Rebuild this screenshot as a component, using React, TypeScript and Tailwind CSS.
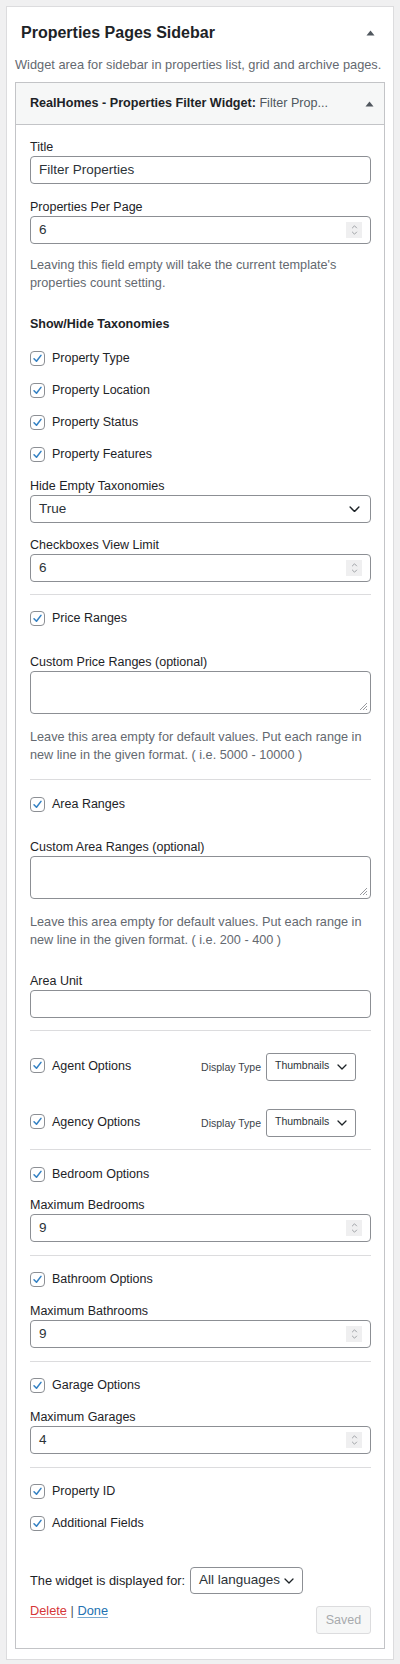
import type { ReactNode } from "react";

const font = "font-['Liberation_Sans',Arial,sans-serif]";

function Caret() {
  return (
    <svg width="9" height="6" viewBox="0 0 9 6" className="shrink-0">
      <path d="M4.5 0.5 L8.5 5.5 L0.5 5.5 Z" fill="#50575e" />
    </svg>
  );
}

function Chevron({ size = 11 }: { size?: number }) {
  return (
    <svg width={size} height={size * 0.6} viewBox="0 0 10 6" className="shrink-0">
      <path d="M1 1 L5 5 L9 1" fill="none" stroke="#1d2327" strokeWidth="1.3" strokeLinecap="round" strokeLinejoin="round" />
    </svg>
  );
}

function Check({ label }: { label: string }) {
  return (
    <div className="flex h-[32px] items-center gap-[7px]">
      <span className="flex h-[15px] w-[15px] items-center justify-center rounded-[4px] border border-[#8c8f94] bg-white">
        <svg width="11" height="11" viewBox="0 0 12 12">
          <path d="M2.2 6.3 L4.9 9 L9.8 2.6" fill="none" stroke="#3582c4" strokeWidth="1.7" strokeLinecap="round" strokeLinejoin="round" />
        </svg>
      </span>
      <span className="text-[12.5px] leading-[18px] text-[#1d2327]">{label}</span>
    </div>
  );
}

function Label({ children }: { children: ReactNode }) {
  return <div className="text-[12.5px] leading-[18px] text-[#1d2327]">{children}</div>;
}

function TextInput({ value = "" }: { value?: string }) {
  return (
    <div className="flex h-[28px] items-center rounded-[4px] border border-[#8c8f94] bg-white px-[8px] text-[13.5px] text-[#2c3338]">
      {value}
    </div>
  );
}

function NumberInput({ value }: { value: string }) {
  return (
    <div className="flex h-[28px] items-center justify-between rounded-[4px] border border-[#8c8f94] bg-white pl-[8px] pr-[8px] text-[13.5px] text-[#2c3338]">
      <span>{value}</span>
      <span className="flex h-[16px] w-[16px] flex-col items-center justify-center gap-[2px] bg-[#efeff0]">
        <svg width="7" height="4" viewBox="0 0 8 5">
          <path d="M1 4 L4 1 L7 4" fill="none" stroke="#8c8f94" strokeWidth="1" />
        </svg>
        <svg width="7" height="4" viewBox="0 0 8 5">
          <path d="M1 1 L4 4 L7 1" fill="none" stroke="#8c8f94" strokeWidth="1" />
        </svg>
      </span>
    </div>
  );
}

function TextArea() {
  return (
    <div className="relative h-[43px] rounded-[4px] border border-[#8c8f94] bg-white">
      <svg width="10" height="10" viewBox="0 0 10 10" className="absolute bottom-[2px] right-[2px]">
        <path d="M9 2 L2 9 M9 5 L5 9 M9 8 L8 9" stroke="#8c8f94" strokeWidth="0.9" />
      </svg>
    </div>
  );
}

function Help({ children }: { children: ReactNode }) {
  return <p className="text-[12.7px] leading-[18px] text-[#646970]">{children}</p>;
}

function Sep() {
  return <div className="h-px bg-[#dcdcde]" />;
}

function DisplayType({ label }: { label: string }) {
  return (
    <div className="flex h-[28px] items-center justify-between pr-[15px]">
      <div className="-mt-[3px] flex h-[28px] items-center">
        <Check label={label} />
      </div>
      <div className="flex items-center gap-[5px]">
        <span className="mt-[2px] text-[10.5px] text-[#3c434a]">Display Type</span>
        <div className="flex h-[28px] w-[90px] items-center justify-between rounded-[3px] border border-[#8c8f94] bg-white pl-[8px] pr-[8px] text-[10.5px] text-[#2c3338]">
          <span className="-mt-[3px]">Thumbnails</span>
          <Chevron size={10} />
        </div>
      </div>
    </div>
  );
}

export default function App() {
  return (
    <div className={`${font} min-h-[1664px] bg-[#f0f0f1] px-[6px] pt-[6px] pb-[6px]`}>
      <div className="border border-[#dcdcde] bg-white px-[8px] pb-[10px]">
        {/* sidebar header */}
        <div className="mt-[16px] flex items-center justify-between pl-[6px] pr-[10px]">
          <h2 className="text-[16px] font-semibold leading-[20px] text-[#1d2327]">Properties Pages Sidebar</h2>
          <Caret />
        </div>
        <p className="mt-[13px] text-[12.8px] leading-[18px] text-[#646970]">
          Widget area for sidebar in properties list, grid and archive pages.
        </p>

        {/* widget */}
        <div className="mt-[8px] border border-[#c3c4c7] bg-white">
          <div className="flex h-[42px] items-center justify-between border-b border-[#c3c4c7] bg-[#f6f7f7] pl-[14px] pr-[10px]">
            <div className="text-[12.6px] text-[#1d2327]">
              <span className="font-semibold">RealHomes - Properties Filter Widget:</span>
              <span className="text-[#50575e]"> Filter Prop...</span>
            </div>
            <Caret />
          </div>

          <div className="px-[13px] pb-[14px] pl-[14px] pt-[13px]">
            <Label>Title</Label>
            <TextInput value="Filter Properties" />

            <div className="mt-[14px]">
              <Label>Properties Per Page</Label>
              <NumberInput value="6" />
            </div>

            <div className="mt-[12px]">
              <Help>
                Leaving this field empty will take the current template's properties count setting.
              </Help>
            </div>

            <div className="mt-[23px] text-[12.5px] font-semibold leading-[18px] text-[#1d2327]">Show/Hide Taxonomies</div>

            <div className="mt-[9px]">
              <Check label="Property Type" />
              <Check label="Property Location" />
              <Check label="Property Status" />
              <Check label="Property Features" />
            </div>

            <div className="mt-[7px]">
              <Label>Hide Empty Taxonomies</Label>
              <div className="flex h-[28px] items-center justify-between rounded-[4px] border border-[#8c8f94] bg-white pl-[8px] pr-[10px] text-[13.5px] text-[#2c3338]">
                <span>True</span>
                <Chevron size={11} />
              </div>
            </div>

            <div className="mt-[13px]">
              <Label>Checkboxes View Limit</Label>
              <NumberInput value="6" />
            </div>

            <div className="mt-[12px]">
              <Sep />
            </div>

            <div className="mt-[7px]">
              <Check label="Price Ranges" />
            </div>

            <div className="mt-[19px]">
              <Label>Custom Price Ranges (optional)</Label>
              <TextArea />
            </div>

            <div className="mt-[14px]">
              <Help>
                Leave this area empty for default values. Put each range in new line in the given format. ( i.e. 5000 - 10000 )
              </Help>
            </div>

            <div className="mt-[15px]">
              <Sep />
            </div>

            <div className="mt-[8px]">
              <Check label="Area Ranges" />
            </div>

            <div className="mt-[18px]">
              <Label>Custom Area Ranges (optional)</Label>
              <TextArea />
            </div>

            <div className="mt-[14px]">
              <Help>
                Leave this area empty for default values. Put each range in new line in the given format. ( i.e. 200 - 400 )
              </Help>
            </div>

            <div className="mt-[23px]">
              <Label>Area Unit</Label>
              <TextInput />
            </div>

            <div className="mt-[12px]">
              <Sep />
            </div>

            <div className="mt-[22px]">
              <DisplayType label="Agent Options" />
            </div>
            <div className="mt-[28px]">
              <DisplayType label="Agency Options" />
            </div>

            <div className="mt-[12px]">
              <Sep />
            </div>

            <div className="mt-[8px]">
              <Check label="Bedroom Options" />
            </div>
            <div className="mt-[6px]">
              <Label>Maximum Bedrooms</Label>
              <NumberInput value="9" />
            </div>

            <div className="mt-[13px]">
              <Sep />
            </div>

            <div className="mt-[7px]">
              <Check label="Bathroom Options" />
            </div>
            <div className="mt-[7px]">
              <Label>Maximum Bathrooms</Label>
              <NumberInput value="9" />
            </div>

            <div className="mt-[13px]">
              <Sep />
            </div>

            <div className="mt-[7px]">
              <Check label="Garage Options" />
            </div>
            <div className="mt-[7px]">
              <Label>Maximum Garages</Label>
              <NumberInput value="4" />
            </div>

            <div className="mt-[13px]">
              <Sep />
            </div>

            <div className="mt-[7px]">
              <Check label="Property ID" />
              <Check label="Additional Fields" />
            </div>

            <div className="mt-[28px] flex items-center gap-[5px]">
              <span className="text-[12.8px] text-[#1d2327]">The widget is displayed for:</span>
              <div className="flex h-[27px] w-[113px] items-center justify-between rounded-[4px] border border-[#8c8f94] bg-white pl-[8px] pr-[8px] text-[13.5px] text-[#2c3338]">
                <span>All languages</span>
                <Chevron size={10} />
              </div>
            </div>

            <div className="mt-[8px] flex items-start justify-between">
              <div className="text-[12.8px] leading-[18px] text-[#50575e]">
                <a className="text-[#d63638] underline decoration-[#d63638]/60 underline-offset-2">Delete</a>
                <span> | </span>
                <a className="text-[#2271b1] underline decoration-[#2271b1]/60 underline-offset-2">Done</a>
              </div>
              <button
                type="button"
                disabled
                className="mt-[4px] h-[28px] w-[55px] rounded-[3px] border border-[#dcdcde] bg-[#f6f7f7] text-[12.5px] text-[#a7aaad]"
              >
                Saved
              </button>
            </div>
          </div>
        </div>
      </div>
    </div>
  );
}
